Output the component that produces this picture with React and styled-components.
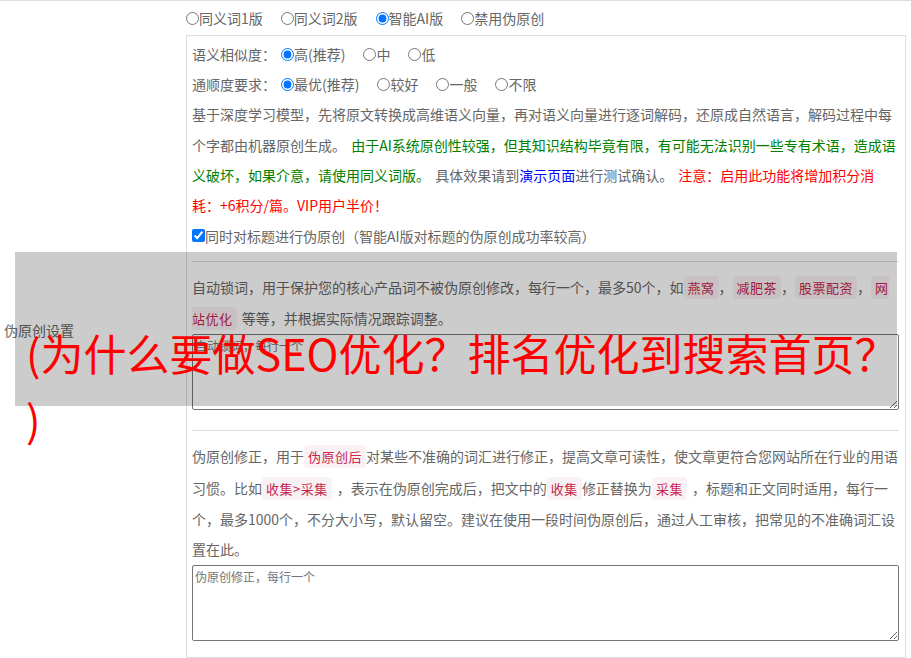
import styled, { createGlobalStyle } from "styled-components";

const GlobalStyle = createGlobalStyle`
  body {
    margin: 0;
    background: #fff;
    font-family: "Microsoft YaHei", "Noto Sans CJK SC", sans-serif;
    font-size: 14px;
    color: #666;
  }
`;

const Page = styled.div`
  position: relative;
  width: 911px;
`;

const Table = styled.div`
  display: grid;
  grid-template-columns: 186px 1fr;
  border-top: 1px solid #ddd;
`;

const LabelCell = styled.div`
  display: flex;
  align-items: center;
  padding-left: 4px;
  padding-bottom: 4px;
`;

const ContentCell = styled.div`
  padding: 0 5px 6px 0;
`;

const ModeRow = styled.div`
  display: flex;
  align-items: center;
  height: 34px;
`;

const FieldRow = styled.div`
  display: flex;
  align-items: center;
  height: 30.2px;
`;

const FieldName = styled.span`
  margin-right: 5px;
`;

const Option = styled.label`
  display: inline-flex;
  align-items: center;
  margin-right: 18px;
  cursor: pointer;
`;

const Radio = styled.input.attrs({ type: "radio" })`
  margin: 0;
  width: 13px;
  height: 13px;
`;

const Check = styled.input.attrs({ type: "checkbox" })`
  margin: 0;
  width: 13px;
  height: 13px;
`;

const Panel = styled.div`
  border: 1px solid #ddd;
  padding: 3px 6px 16px 5px;
`;

const Para = styled.p`
  margin: 0;
  line-height: 30.3px;
  word-spacing: 2px;
`;

const toneColors = { green: "#008000", blue: "#0000ff", red: "#ff0000" };

const Tone = styled.span`
  color: ${(p) => toneColors[p.$tone]};
`;

const Section = styled.div`
  margin-top: ${(p) => p.$gap}px;
  padding-top: 10px;
  border-top: 1px solid #ddd;
`;

const Code = styled.code`
  padding: 2px 4px;
  font-family: "Noto Sans CJK SC", sans-serif;
  font-size: 13px;
  letter-spacing: 0.5px;
  word-spacing: 0;
  color: #c7254e;
  background: #f9f2f4;
  border-radius: 4px;
`;

const TextBox = styled.textarea`
  display: block;
  box-sizing: border-box;
  width: 100%;
  height: 76px;
  margin: 0;
  padding: 2px;
  border: 1px solid #767676;
  border-radius: 2px;
  font-family: "Noto Sans CJK SC", sans-serif;
  font-size: 12px;
  &::placeholder {
    color: #757575;
  }
`;

const Overlay = styled.div`
  position: absolute;
  left: 15px;
  top: 252px;
  width: 882px;
  height: 154px;
  box-sizing: border-box;
  padding: 67px 0 0 11px;
  background: rgba(0, 0, 0, 0.2);
  pointer-events: none;
`;

const Headline = styled.div`
  margin-right: -8px;
  color: #ff0000;
  font-family: "Noto Sans CJK SC", sans-serif;
  font-size: 43px;
  line-height: 66px;
  line-break: anywhere;
`;

function ModeOption({ label, checked }) {
  return (
    <Option>
      <Radio name="mode" defaultChecked={checked} />
      {label}
    </Option>
  );
}

export default function App() {
  return (
    <Page>
      <GlobalStyle />
      <Table>
        <LabelCell>伪原创设置</LabelCell>
        <ContentCell>
          <ModeRow>
            <ModeOption label="同义词1版" />
            <ModeOption label="同义词2版" />
            <ModeOption label="智能AI版" checked />
            <ModeOption label="禁用伪原创" />
          </ModeRow>
          <Panel>
            <FieldRow>
              <FieldName>语义相似度：</FieldName>
              <Option>
                <Radio name="sim" defaultChecked />
                高(推荐)
              </Option>
              <Option>
                <Radio name="sim" />中
              </Option>
              <Option>
                <Radio name="sim" />低
              </Option>
            </FieldRow>
            <FieldRow>
              <FieldName>通顺度要求：</FieldName>
              <Option>
                <Radio name="flu" defaultChecked />
                最优(推荐)
              </Option>
              <Option>
                <Radio name="flu" />较好
              </Option>
              <Option>
                <Radio name="flu" />一般
              </Option>
              <Option>
                <Radio name="flu" />不限
              </Option>
            </FieldRow>
            <Para>
              基于深度学习模型，先将原文转换成高维语义向量，再对语义向量进行逐词解码，还原成自然语言，解码过程中每个字都由机器原创生成。{" "}
              <Tone $tone="green">
                由于AI系统原创性较强，但其知识结构毕竟有限，有可能无法识别一些专有术语，造成语义破坏，如果介意，请使用同义词版。
              </Tone>{" "}
              具体效果请到<Tone $tone="blue">演示页面</Tone>进行测试确认。{" "}
              <Tone $tone="red">
                注意：启用此功能将增加积分消耗：+6积分/篇。VIP用户半价！
              </Tone>
            </Para>
            <FieldRow>
              <Option>
                <Check defaultChecked />
                同时对标题进行伪原创（智能AI版对标题的伪原创成功率较高）
              </Option>
            </FieldRow>
            <Section $gap={10}>
              <Para>
                自动锁词，用于保护您的核心产品词不被伪原创修改，每行一个，最多50个，如<Code>燕窝</Code>，<Code>减肥茶</Code>，<Code>股票配资</Code>，<Code>网站优化</Code> 等等，并根据实际情况跟踪调整。
              </Para>
              <TextBox placeholder="自动锁词，每行一个" />
            </Section>
            <Section $gap={20}>
              <Para>
                伪原创修正，用于<Code>伪原创后</Code>对某些不准确的词汇进行修正，提高文章可读性，使文章更符合您网站所在行业的用语习惯。比如<Code>收集&gt;采集</Code> ，表示在伪原创完成后，把文中的<Code>收集</Code>修正替换为<Code>采集</Code> ，标题和正文同时适用，每行一个，最多1000个，不分大小写，默认留空。建议在使用一段时间伪原创后，通过人工审核，把常见的不准确词汇设置在此。
              </Para>
              <TextBox placeholder="伪原创修正，每行一个" />
            </Section>
          </Panel>
        </ContentCell>
      </Table>
      <Overlay>
        <Headline>(为什么要做SEO优化？排名优化到搜索首页？)</Headline>
      </Overlay>
    </Page>
  );
}
